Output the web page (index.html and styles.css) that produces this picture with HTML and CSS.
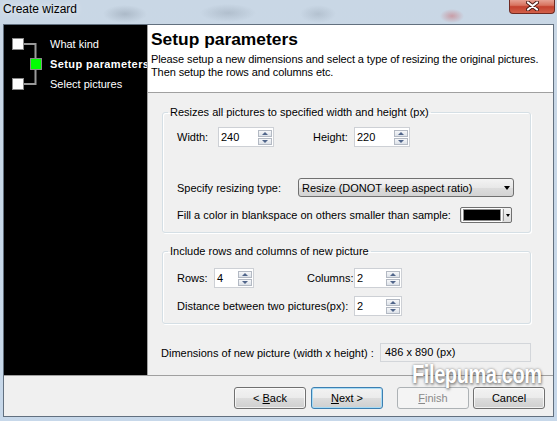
FILE: index.html
```html
<!DOCTYPE html>
<html lang="en">
  <head>
    <meta charset="UTF-8" />
    <title>Create wizard</title>
    <link rel="stylesheet" href="styles.css">
  </head>
  <body>
    <div class="window">
      <div class="titlebar">
        <span class="caption">Create wizard</span>
        <span class="close">
          <svg width="13" height="10" viewBox="0 0 13 10">
            <path d="M2 1.5L11 8.5M11 1.5L2 8.5" stroke="#4a1a14" stroke-width="4" stroke-linecap="round"/>
            <path d="M2 1.5L11 8.5M11 1.5L2 8.5" stroke="#fff" stroke-width="2.2" stroke-linecap="round"/>
          </svg>
        </span>
      </div>

      <div class="client">
        <div class="main">
          <div class="steps">
            <svg class="tree" width="46" height="60" viewBox="0 0 46 60">
              <path d="M20 10H31.5V50H20" fill="none" stroke="#9a9a9a" stroke-width="2"/>
              <rect x="8.5" y="4.5" width="11" height="11" fill="#fff" stroke="#8a8a8a"/>
              <rect x="26.5" y="24.5" width="11" height="11" fill="#00ff00" stroke="#8a8a8a"/>
              <rect x="8.5" y="44.5" width="11" height="11" fill="#fff" stroke="#8a8a8a"/>
            </svg>
            <ul class="step-list">
              <li>What kind</li>
              <li class="current">Setup parameters</li>
              <li>Select pictures</li>
            </ul>
          </div>

          <div class="pane">
            <div class="header">
              <h1>Setup parameters</h1>
              <p>
                Please setup a new dimensions and select a type of resizing the original pictures.<br>
                Then setup the rows and columns etc.
              </p>
            </div>

            <div class="form">
              <fieldset class="group size-group">
                <legend>Resizes all pictures to specified width and height (px)</legend>
                <div class="row">
                  <span class="label w-width">Width:</span>
                  <div class="spin spin-lg">
                    <span class="spin-val">240</span>
                    <span class="spin-btns"><i class="up"></i><i class="down"></i></span>
                  </div>
                  <span class="label w-height">Height:</span>
                  <div class="spin spin-lg">
                    <span class="spin-val">220</span>
                    <span class="spin-btns"><i class="up"></i><i class="down"></i></span>
                  </div>
                </div>
                <div class="row row-type">
                  <span class="label w-type">Specify resizing type:</span>
                  <div class="select">
                    <span>Resize (DONOT keep aspect ratio)</span>
                    <i class="caret"></i>
                  </div>
                </div>
                <div class="row row-fill">
                  <span class="label w-fill">Fill a color in blankspace on others smaller than sample:</span>
                  <div class="picker">
                    <span class="swatch"></span>
                    <span class="picker-drop"><i class="caret caret-sm"></i></span>
                  </div>
                </div>
              </fieldset>

              <fieldset class="group grid-group">
                <legend>Include rows and columns of new picture</legend>
                <div class="row">
                  <span class="label w-rows">Rows:</span>
                  <div class="spin spin-sm">
                    <span class="spin-val">4</span>
                    <span class="spin-btns"><i class="up"></i><i class="down"></i></span>
                  </div>
                  <span class="label w-cols">Columns:</span>
                  <div class="spin spin-md">
                    <span class="spin-val">2</span>
                    <span class="spin-btns"><i class="up"></i><i class="down"></i></span>
                  </div>
                </div>
                <div class="row row-dist">
                  <span class="label w-dist">Distance between two pictures(px):</span>
                  <div class="spin spin-md">
                    <span class="spin-val">2</span>
                    <span class="spin-btns"><i class="up"></i><i class="down"></i></span>
                  </div>
                </div>
              </fieldset>

              <div class="result">
                <span class="label w-result">Dimensions of new picture (width x height) :</span>
                <span class="readonly">486 x 890 (px)</span>
              </div>
            </div>
          </div>
        </div>

        <div class="buttons">
          <button class="btn">&lt; <u>B</u>ack</button>
          <button class="btn default"><u>N</u>ext &gt;</button>
          <button class="btn finish" disabled><u>F</u>inish</button>
          <button class="btn cancel">Cancel</button>
        </div>
      </div>

      <div class="watermark">Filepuma.com</div>
    </div>
  </body>
</html>
```

FILE: styles.css
```css
* {
  box-sizing: border-box;
}
body {
  margin: 0;
  font-family: "Liberation Sans", Arial, sans-serif;
  font-size: 11px;
  color: #000;
}

/* window frame, aero glass */
.window {
  position: relative;
  width: 557px;
  height: 421px;
  overflow: hidden;
  background:
    radial-gradient(ellipse 22px 9px at 125px 14px, rgba(70, 82, 98, 0.22), transparent),
    radial-gradient(ellipse 28px 9px at 228px 13px, rgba(70, 82, 98, 0.18), transparent),
    radial-gradient(ellipse 18px 9px at 318px 14px, rgba(70, 82, 98, 0.16), transparent),
    radial-gradient(ellipse 12px 7px at 452px 16px, rgba(200, 50, 50, 0.35), transparent),
    linear-gradient(#c9d7e5, #c7d8ea);
}
.titlebar {
  display: flex;
  justify-content: space-between;
  align-items: flex-start;
  height: 24px;
  padding-left: 3px;
}
.caption {
  font-size: 12px;
  line-height: 15px;
  padding-top: 2px;
  text-shadow: 0 0 6px rgba(255, 255, 255, 0.9);
}
.close {
  display: flex;
  align-items: center;
  justify-content: center;
  width: 46px;
  height: 15px;
  margin: -1px 2px 0 0;
  border: 1px solid #6f2a22;
  border-top: none;
  border-radius: 0 0 4px 4px;
  background: linear-gradient(#e9a99c, #d8735f 45%, #c4412e 55%, #d2604a);
}

.client {
  display: flex;
  flex-direction: column;
  height: 393px;
  margin: 0 3px;
  border: 1px solid #62707f;
  background: #f0f0f0;
}
.main {
  display: flex;
  height: 351px;
  border-bottom: 1px solid #a0a0a0;
}

/* step list on the left */
.steps {
  display: flex;
  width: 144px;
  flex: none;
  padding-top: 9px;
  overflow: hidden;
  background: #000;
  border-right: 1px solid #a0a0a0;
  color: #fff;
}
.tree {
  flex: none;
}
.step-list {
  list-style: none;
  margin: 0;
  padding: 0;
  white-space: nowrap;
}
.step-list li {
  line-height: 20px;
}
.step-list .current {
  font-weight: bold;
  letter-spacing: 0.4px;
}

.pane {
  display: flex;
  flex-direction: column;
  flex: 1;
  min-width: 0;
}
.header {
  height: 68px;
  padding: 4px 0 0 3px;
  background: #fff;
  border-bottom: 1px solid #a0a0a0;
}
h1 {
  margin: 0 0 4px;
  font-size: 17.4px;
  line-height: 20px;
}
.header p {
  margin: 0;
  line-height: 13px;
  letter-spacing: -0.1px;
}

.form {
  flex: 1;
  padding-top: 13px;
}
.group {
  width: 369px;
  min-width: 0;
  margin: 0 0 0 14px;
  padding: 8px 0 9px;
  border: 1px solid #d5dfe5;
  border-radius: 3px;
  box-shadow: inset 1px 1px 0 #fff, 1px 1px 0 #fff;
}
.group legend {
  margin-left: 5px;
  padding: 0 2px;
  line-height: 13px;
}
.grid-group {
  margin-top: 12px;
  padding: 10px 0 7px;
}
.row {
  display: flex;
  align-items: center;
  margin-left: 14px;
}
.row-type {
  margin-top: 31px;
}
.row-fill {
  margin-top: 10px;
}
.row-dist {
  margin-top: 8px;
}
.label {
  flex: none;
  white-space: nowrap;
}
.w-width { width: 41px; }
.w-height { width: 41px; margin-left: 39px; }
.w-type { width: 121px; }
.w-fill { width: 283px; }
.w-rows { width: 37px; }
.w-cols { width: 47px; margin-left: 53px; }
.w-dist { width: 177px; }
.w-result { width: 219px; }

/* spin edits */
.spin {
  display: flex;
  height: 20px;
  background: #fff;
  border: 1px solid #cdd0d5;
}
.spin-lg { width: 56px; }
.spin-md { width: 48px; }
.spin-sm { width: 40px; }
.spin-val {
  flex: 1;
  padding-left: 2px;
  line-height: 18px;
}
.spin-btns {
  display: flex;
  flex-direction: column;
  justify-content: center;
  gap: 1px;
  width: 15px;
  padding: 1px 1px 1px 0;
}
.spin-btns i {
  display: flex;
  align-items: center;
  justify-content: center;
  height: 7px;
  border: 1px solid #b3b9c3;
  background: linear-gradient(#f6f7f9, #dde2e9);
}
.spin-btns i::after {
  content: "";
  border-left: 3px solid transparent;
  border-right: 3px solid transparent;
}
.spin-btns .up::after {
  border-bottom: 3px solid #50658a;
}
.spin-btns .down::after {
  border-top: 3px solid #50658a;
}

/* combo box */
.select {
  display: flex;
  align-items: center;
  justify-content: space-between;
  width: 216px;
  height: 19px;
  padding: 0 3px 0 3px;
  border: 1px solid #707070;
  border-radius: 3px;
  background: linear-gradient(#f3f3f3, #e8e8e8 50%, #dddddd 50%, #d3d3d3);
}
.caret {
  border-left: 3.5px solid transparent;
  border-right: 3.5px solid transparent;
  border-top: 4px solid #000;
}
.caret-sm {
  border-left-width: 2.5px;
  border-right-width: 2.5px;
  border-top-width: 3px;
}

/* colour picker */
.picker {
  display: flex;
  align-items: center;
  width: 52px;
  height: 16px;
  padding: 1px 0 1px 2px;
  border: 1px solid #707070;
  border-radius: 2px;
  background: linear-gradient(#f3f3f3, #dcdcdc);
}
.swatch {
  width: 38px;
  height: 12px;
  background: #000;
  border: 1px solid #8c8c8c;
  box-shadow: 0 0 0 1px #fff;
}
.picker-drop {
  display: flex;
  align-items: center;
  justify-content: center;
  flex: 1;
  height: 12px;
  margin-left: 2px;
  border-left: 1px solid #9a9a9a;
}

.result {
  display: flex;
  align-items: center;
  margin: 19px 0 0 13px;
}
.readonly {
  width: 151px;
  height: 19px;
  padding-left: 4px;
  line-height: 17px;
  background: #f0f0f0;
  border: 1px solid #d3d6da;
}

/* wizard buttons */
.buttons {
  display: flex;
  justify-content: flex-end;
  padding: 11px 8px 0 0;
}
.btn {
  width: 72px;
  height: 22px;
  padding: 0;
  font: inherit;
  color: #000;
  border: 1px solid #707070;
  border-radius: 3px;
  background: linear-gradient(#f2f2f2, #ebebeb 50%, #dddddd 50%, #cfcfcf);
  box-shadow: inset 0 0 0 1px rgba(255, 255, 255, 0.7);
}
.btn + .btn {
  margin-left: 5px;
}
.btn.default {
  border-color: #3c7fb1;
  box-shadow: inset 0 0 0 1px #a7dbf5;
}
.btn.finish {
  margin-left: 14px;
  color: #8a8a8a;
  border-color: #adb2b5;
  background: #f4f4f4;
  box-shadow: none;
}
.btn.cancel {
  margin-left: 4px;
}

/* site stamp over the corner */
.watermark {
  position: absolute;
  left: 412px;
  top: 362px;
  font-size: 25px;
  font-weight: bold;
  line-height: 25px;
  letter-spacing: -0.5px;
  white-space: nowrap;
  color: #fff;
  transform: scaleX(0.8);
  transform-origin: left top;
  text-shadow: 0 0 3px rgba(0, 0, 0, 0.45), 1px 2px 3px rgba(0, 0, 0, 0.35);
}
```
